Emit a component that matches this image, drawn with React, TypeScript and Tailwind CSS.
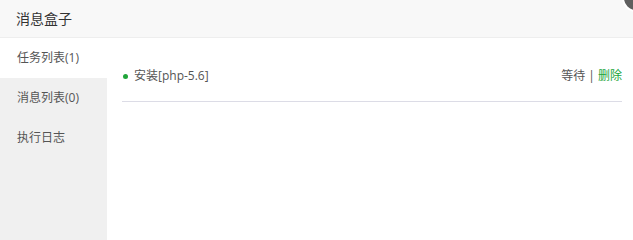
export default function App() {
  const tabs = ['任务列表(1)', '消息列表(0)', '执行日志'];
  return (
    <div
      className="relative flex h-[240px] w-[633px] flex-col overflow-hidden bg-white text-[#333]"
      style={{ fontFamily: '"Open Sans", "Noto Sans CJK SC", sans-serif' }}
    >
      <div className="flex h-[38px] shrink-0 items-center border-b border-[#eee] bg-[#f8f8f8] pl-4 text-[14px] text-[#333]">
        消息盒子
      </div>
      <div className="absolute right-[-17px] top-[-16px] h-[28px] w-[28px] rounded-full border-2 border-white bg-[#5f5f5f]" />
      <div className="flex flex-1">
        <div className="w-[107px] shrink-0 bg-[#f0f0f0]">
          {tabs.map((t, i) => (
            <div
              key={t}
              className={`flex h-[40px] items-center pl-[17px] text-[12px] text-[#555] ${i === 0 ? 'bg-white' : ''}`}
            >
              {t}
            </div>
          ))}
        </div>
        <div className="flex-1 pl-[15px] pr-[11px] pt-[28px]">
          <div className="flex h-[20px] items-center justify-between text-[12px] text-[#555]">
            <div className="flex items-center">
              <span className="ml-[1px] mr-[6px] h-[5px] w-[5px] rounded-full bg-[#20a53a]" />
              安装[php-5.6]
            </div>
            <div>
              等待 | <span className="text-[#20a53a]">删除</span>
            </div>
          </div>
          <div className="mt-[15px] border-b border-[#dcdce6]" />
        </div>
      </div>
    </div>
  );
}
